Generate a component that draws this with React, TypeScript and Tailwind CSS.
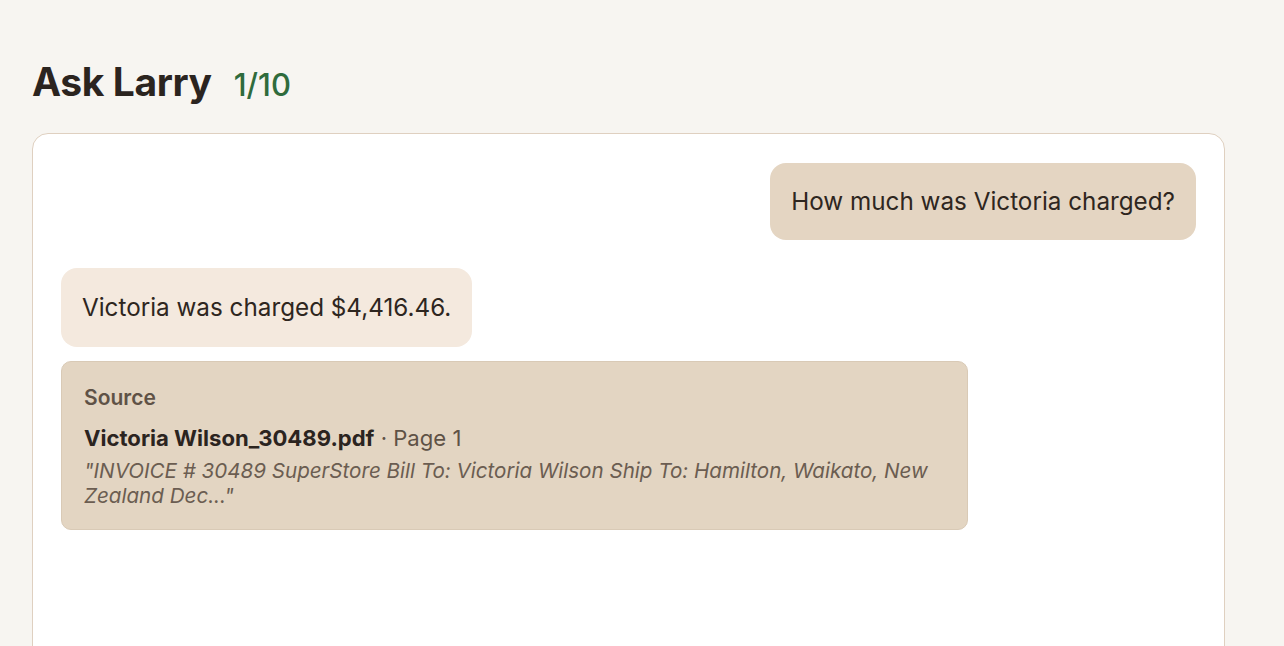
import React from "react";

export default function App() {
  return (
    <div
      className="min-h-[646px] w-full bg-[#f7f5f1] px-8 pt-[58px] text-[#2b241f]"
      style={{ fontFamily: "Inter, 'Noto Sans', sans-serif" }}
    >
      <div className="flex items-baseline gap-[22px]">
        <h1 className="text-[39px] font-bold leading-[48px] tracking-[-0.01em] text-[#2b241f]">Ask Larry</h1>
        <span className="text-[31px] font-medium text-[#2f6b3c]">1/10</span>
      </div>
      <div className="mt-[24px] mr-[27px] h-[560px] rounded-[16px] border border-[#dfd0c0] bg-white px-[28px] pt-[29px]">
        <div className="flex justify-end">
          <div className="rounded-[16px] bg-[#e4d5c2] px-[21px] py-[24px] text-[24.25px] leading-[29px] text-[#2e2620]">
            How much was Victoria charged?
          </div>
        </div>
        <div className="mt-[28px] flex">
          <div className="rounded-[16px] bg-[#f4e9de] px-[21px] py-[25px] text-[24.25px] leading-[29px] text-[#2e2620]">
            Victoria was charged $4,416.46.
          </div>
        </div>
        <div className="mt-[14px] w-[907px] rounded-[10px] border border-[#d9cab6] bg-[#e3d5c2] px-[22px] pt-[23px] pb-[21px]">
          <div className="text-[21px] font-semibold leading-[26px] text-[#5f5246]">Source</div>
          <div className="mt-[13px] text-[22.1px] leading-[28px]">
            <span className="font-bold text-[#2b241f]">Victoria Wilson_30489.pdf</span>
            <span className="text-[#5f5246]"> · Page 1</span>
          </div>
          <div className="mt-[6px] text-[20.6px] italic leading-[25px] text-[#6b5d51]">
            "INVOICE # 30489 SuperStore Bill To: Victoria Wilson Ship To: Hamilton, Waikato, New Zealand Dec..."
          </div>
        </div>
      </div>
    </div>
  );
}
